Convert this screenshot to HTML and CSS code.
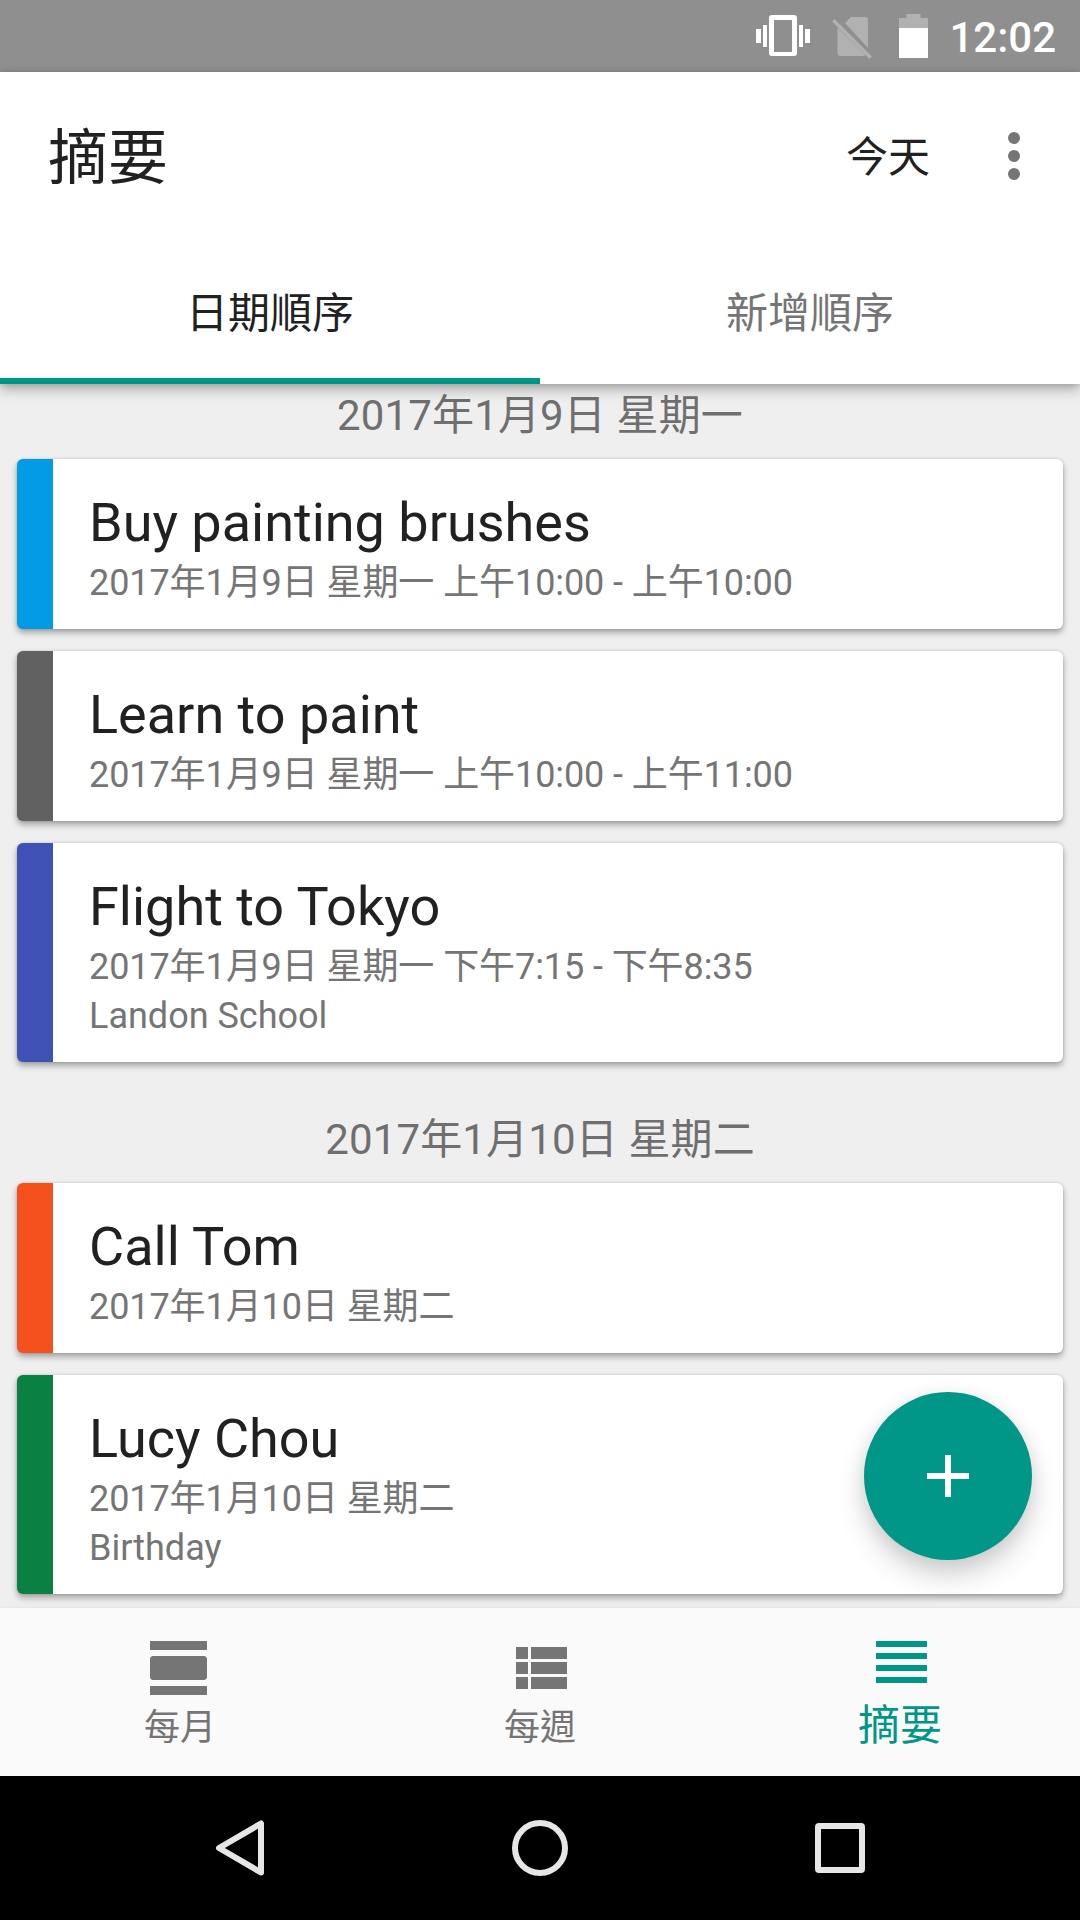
FILE: index.html
```html
<!DOCTYPE html>
<html lang="zh-Hant">
<head>
<meta charset="utf-8">
<title>摘要</title>
<link rel="stylesheet" href="styles.css">
</head>
<body>
<div class="status-bar">
  <svg class="status-vibrate" width="54" height="42" viewBox="0 0 54 42" fill="#fff">
    <path d="M0 14h5v14H0zM7 10h4v22H7zM43 10h4v22h-4zM49 14h5v14h-5z"/>
    <path fill-rule="evenodd" d="M16 0h22q3 0 3 3v35q0 3-3 3H16q-3 0-3-3V3q0-3 3-3zM18 5v32h18V5z"/>
  </svg>
  <svg class="status-sim" width="40" height="42" viewBox="0 0 40 42" fill="#b1b1b1">
    <path d="M19 0h14q3 0 3 3v28L13 6zM5.500 10.500 33.500 38Q33 39 31 39H9q-3.500 0-3.500-3.500z"/>
    <path d="M2.500 2 40 39.500 37.500 42 0 4.500z"/>
  </svg>
  <svg class="status-battery" width="29" height="44" viewBox="0 0 29 44">
    <path d="M7.500 0h14v4H29v10H0V4h7.500z" fill="#b1b1b1"/>
    <path d="M0 14h29v30H0z" fill="#fff"/>
  </svg>
  <span class="clock">12:02</span>
</div>

<header class="app-header">
  <div class="toolbar">
    <h1 class="toolbar-title">摘要</h1>
    <span class="toolbar-action">今天</span>
    <svg class="toolbar-more" width="12" height="48" viewBox="0 0 12 48" fill="#757575">
      <circle cx="6" cy="6" r="6"/><circle cx="6" cy="24" r="6"/><circle cx="6" cy="42" r="6"/>
    </svg>
  </div>
  <div class="tabs">
    <div class="tab tab-active">日期順序</div>
    <div class="tab">新增順序</div>
  </div>
</header>

<main class="agenda">
  <h2 class="day">2017年1月9日 星期一</h2>
  <div class="events">
    <article class="event event-blue">
      <h3 class="event-title">Buy painting brushes</h3>
      <p class="event-line event-time">2017年1月9日 星期一 上午10:00 - 上午10:00</p>
    </article>
    <article class="event event-gray">
      <h3 class="event-title">Learn to paint</h3>
      <p class="event-line event-time">2017年1月9日 星期一 上午10:00 - 上午11:00</p>
    </article>
    <article class="event event-indigo">
      <h3 class="event-title">Flight to Tokyo</h3>
      <p class="event-line event-time">2017年1月9日 星期一 下午7:15 - 下午8:35</p>
      <p class="event-line">Landon School</p>
    </article>
  </div>
  <h2 class="day">2017年1月10日 星期二</h2>
  <div class="events">
    <article class="event event-orange">
      <h3 class="event-title">Call Tom</h3>
      <p class="event-line event-time">2017年1月10日 星期二</p>
    </article>
    <article class="event event-green">
      <h3 class="event-title">Lucy Chou</h3>
      <p class="event-line event-time">2017年1月10日 星期二</p>
      <p class="event-line">Birthday</p>
    </article>
  </div>
  <div class="fab">
    <svg width="42" height="42" viewBox="0 0 42 42" fill="#fff"><path d="M18 0h6v18h18v6H24v18h-6V24H0v-6h18z"/></svg>
  </div>
</main>

<nav class="bottom-nav">
  <div class="nav-item">
    <svg width="72" height="72" viewBox="0 0 24 24" fill="currentColor"><path d="M2 21h19v-3H2v3zM20 8H3c-.55 0-1 .45-1 1v6c0 .55.45 1 1 1h17c.55 0 1-.45 1-1V9c0-.55-.45-1-1-1zM2 3v3h19V3H2z"/></svg>
    <span>每月</span>
  </div>
  <div class="nav-item">
    <svg width="72" height="72" viewBox="0 0 24 24" fill="currentColor"><path d="M4 14h4v-4H4v4zm0 5h4v-4H4v4zM4 9h4V5H4v4zm5 5h12v-4H9v4zm0 5h12v-4H9v4zM9 5v4h12V5H9z"/></svg>
    <span>每週</span>
  </div>
  <div class="nav-item nav-item-active">
    <svg width="72" height="72" viewBox="0 0 24 24" fill="currentColor"><path d="M4 15h17v-2H4v2zm0 4h17v-2H4v2zm0-8h17V9H4v2zm0-6v2h17V5H4z"/></svg>
    <span>摘要</span>
  </div>
</nav>

<div class="system-nav">
  <svg width="60" height="60" viewBox="0 0 60 60"><path d="M51 5.500v49L9 30z"/></svg>
  <svg width="60" height="60" viewBox="0 0 60 60"><circle cx="30" cy="30" r="25"/></svg>
  <svg width="60" height="60" viewBox="0 0 60 60"><rect x="8" y="8" width="44" height="44" rx="1"/></svg>
</div>
</body>
</html>
```

FILE: styles.css
```css
* { box-sizing: border-box; margin: 0; padding: 0; }

body {
  display: flex;
  flex-direction: column;
  width: 1080px;
  height: 1920px;
  overflow: hidden;
  background: #efefef;
  color: #212121;
  font-family: Roboto, "Noto Sans CJK TC", sans-serif;
}

h1, h2, h3 { font-weight: 400; }
svg { display: block; flex: none; }

.status-bar {
  display: flex;
  align-items: center;
  justify-content: flex-end;
  flex: none;
  height: 72px;
  padding-right: 24px;
  background: #8f8f8f;
}
.status-sim { margin-left: 22px; margin-top: 3px; }
.status-battery { margin-left: 27px; }
.clock {
  margin-left: 21px;
  padding-top: 4px;
  color: #fff;
  font-size: 42px;
  font-weight: 500;
  line-height: 68px;
}

.app-header {
  position: relative;
  z-index: 1;
  flex: none;
  height: 312px;
  background: #fff;
  box-shadow: 0 6px 12px rgba(0, 0, 0, .26), 0 1px 6px rgba(0, 0, 0, .14);
}
.toolbar {
  display: flex;
  align-items: center;
  height: 168px;
  padding: 0 60px 0 48px;
}
.toolbar-title { flex: 1; padding-top: 5px; font-size: 60px; line-height: 84px; }
.toolbar-action { margin-right: 78px; padding-top: 4px; font-size: 42px; line-height: 60px; }
.tabs { display: grid; grid-template-columns: 1fr 1fr; height: 144px; }
.tab {
  height: 144px;
  padding-top: 10px;
  border-bottom: 6px solid transparent;
  color: #757575;
  font-size: 42px;
  line-height: 128px;
  text-align: center;
}
.tab-active { border-color: #009688; color: #212121; }

.agenda {
  position: relative;
  flex: none;
  height: 1224px;
  padding: 7px 17px 0;
}
.day {
  height: 50px;
  color: #6f6f6f;
  font-size: 42px;
  letter-spacing: .14px;
  line-height: 50px;
  text-align: center;
}
.events {
  display: flex;
  flex-direction: column;
  gap: 22px;
  margin: 18px 0 53px;
}
.event {
  padding: 28px 36px 21px;
  border-left: 36px solid;
  border-radius: 6px;
  background: #fff;
  box-shadow: 0 4px 6px rgba(0, 0, 0, .3), 0 0 3px rgba(0, 0, 0, .16);
}
.event-title { height: 72px; color: #212121; font-size: 54px; line-height: 71px; }
.event-line { height: 49px; color: #757575; font-size: 36px; line-height: 49px; }
.event-time { letter-spacing: -.08px; }
.event-blue { border-color: #039be5; }
.event-gray { border-color: #616161; }
.event-indigo { border-color: #3f51b5; }
.event-orange { border-color: #f4511e; }
.event-green { border-color: #0b8043; }

.fab {
  position: absolute;
  right: 48px;
  bottom: 48px;
  display: flex;
  align-items: center;
  justify-content: center;
  width: 168px;
  height: 168px;
  border-radius: 50%;
  background: #009688;
  box-shadow: 0 16px 28px rgba(0, 0, 0, .17), 0 3px 18px rgba(0, 0, 0, .08);
}

.bottom-nav {
  position: relative;
  display: grid;
  grid-template-columns: repeat(3, 1fr);
  flex: none;
  height: 168px;
  background: #fafafa;
  box-shadow: 0 0 3px rgba(0, 0, 0, .08);
}
.nav-item {
  display: flex;
  flex-direction: column;
  align-items: center;
  gap: 2px;
  padding-top: 24px;
  color: #757575;
  font-size: 36px;
  line-height: 44px;
}
.nav-item-active { padding-top: 18px; color: #009688; font-size: 42px; line-height: 52px; }

.system-nav {
  display: flex;
  align-items: center;
  justify-content: space-between;
  flex: none;
  height: 144px;
  padding: 0 210px;
  background: #000;
}
.system-nav svg { fill: none; stroke: #e6e6e6; stroke-width: 6; stroke-linejoin: round; }
```
